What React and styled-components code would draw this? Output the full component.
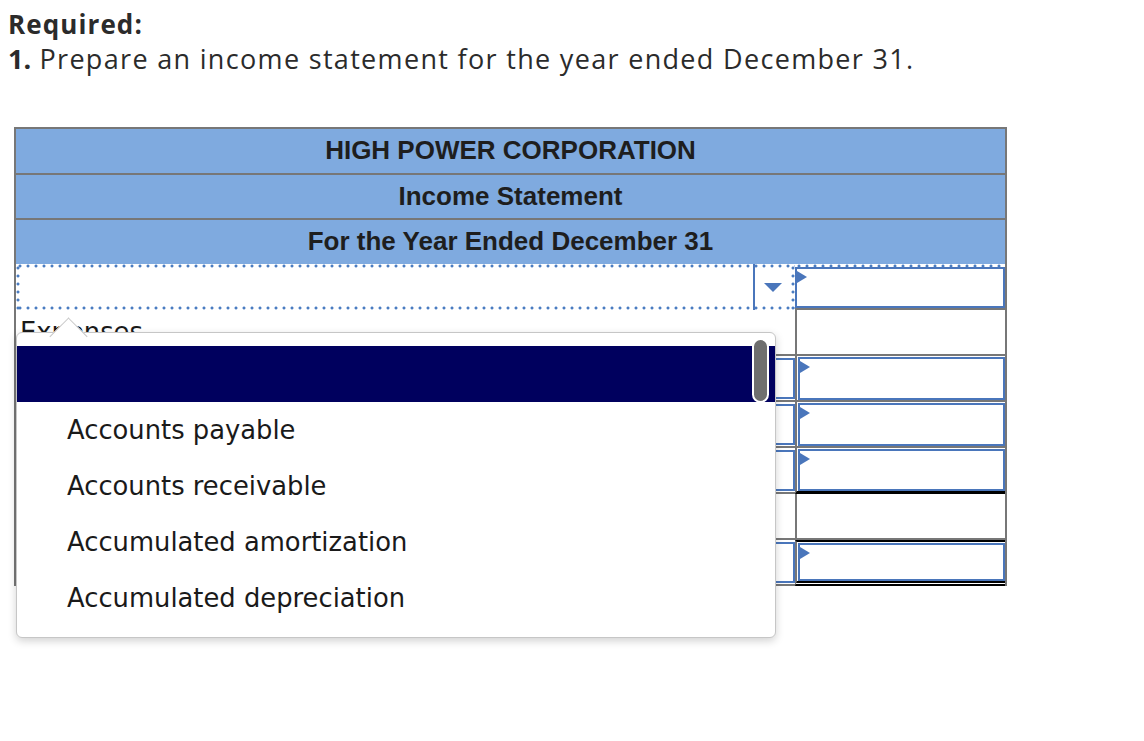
import React from "react";
import styled, { createGlobalStyle, css } from "styled-components";

const Global = createGlobalStyle`
  html, body { margin: 0; padding: 0; background: #fff; }
  body { font-family: "Liberation Sans", Arial, sans-serif; color: #222; }
`;

const DOT = "#4a7cc1";
const dotH = `radial-gradient(circle, ${DOT} 1.2px, transparent 1.8px)`;

const Page = styled.div`
  padding: 9px 0 0 8px;
  width: 1144px;
  height: 741px;
  box-sizing: border-box;
  overflow: hidden;
`;

const Heading = styled.div`
  font-family: "Open Sans", Lato, sans-serif;
  font-weight: 700;
  font-size: 26px;
  line-height: 31px;
  color: #2b2b2b;
  letter-spacing: 1.1px;
`;

const Instruction = styled.div`
  font-family: "Open Sans", Lato, sans-serif;
  font-size: 27px;
  line-height: 38px;
  letter-spacing: 1.32px;
  color: #2b2b2b;
  b { font-weight: 700; letter-spacing: 0; }
`;

const TableWrap = styled.div`
  position: relative;
  margin: 49px 0 0 6px;
  width: 993px;
`;

const Statement = styled.div`
  border: 2px solid #777;
  border-bottom: none;
  width: 993px;
  box-sizing: border-box;
`;

const HeaderRow = styled.div`
  height: 43.5px;
  display: flex;
  align-items: center;
  justify-content: center;
  background: #7faadf;
  font-family: "Liberation Sans", Arial, sans-serif;
  font-weight: 700;
  font-size: 26px;
  color: #1e1e1e;
  border-bottom: ${(p) => (p.$last ? "none" : "2px solid #777")};
`;

const BodyRow = styled.div`
  display: grid;
  grid-template-columns: 779px 1fr;
  height: 46px;
  box-sizing: border-box;
`;

const dottedFrame = css`
  background:
    ${dotH} 0 0 / 8px 4px repeat-x,
    ${dotH} 0 100% / 8px 4px repeat-x,
    ${dotH} 0 0 / 4px 8px repeat-y,
    ${dotH} 100% 0 / 4px 8px repeat-y;
  padding: 4px 4px 4px 4px;
`;

const LabelCell = styled.div`
  box-sizing: border-box;
  display: flex;
  align-items: center;
  position: relative;
  font-family: "DejaVu Sans", Verdana, sans-serif;
  font-size: 25.8px;
  color: #1a1a1a;
  padding-left: 4px;
  ${(p) =>
    p.$focused
      ? dottedFrame
      : css`
          border-bottom: 2px solid #777;
        `}
`;

const SelectBox = styled.div`
  flex: 1;
  align-self: stretch;
  display: flex;
  justify-content: flex-end;
  box-sizing: border-box;
  ${(p) =>
    p.$boxed &&
    css`
      margin: 2px 0 1px 4px;
      border: 2px solid #4a76bb;
    `}
`;

const ArrowZone = styled.div`
  width: 36px;
  margin: -4px 0;
  border-left: 2px solid #4a76bb;
  display: flex;
  align-items: center;
  justify-content: center;
  &::after {
    content: "";
    border-left: 9px solid transparent;
    border-right: 9px solid transparent;
    border-top: 9px solid #4a76bb;
    margin-top: 1px;
  }
`;

const bottomBorders = {
  gray: "2px solid #777",
  black: "3px solid #000",
  double: "5px double #000",
};

const AmountCell = styled.div`
  box-sizing: border-box;
  border-left: ${(p) => (p.$focused ? "none" : "2px solid #777")};
  border-top: ${(p) => (p.$topBlack ? "2px solid #000" : "none")};
  border-bottom: ${(p) => bottomBorders[p.$bottom || "gray"]};
  padding: 1px 0 0 1px;
  display: flex;
  ${(p) =>
    p.$focused &&
    css`
      background: ${dotH} 0 0 / 8px 4px repeat-x;
      padding: 3px 0 0 0;
    `}
`;

const AmountInput = styled.div`
  flex: 1;
  position: relative;
  box-sizing: border-box;
  border: 2px solid #4a76bb;
  &::before {
    content: "";
    position: absolute;
    left: 0;
    top: 2px;
    border-top: 6px solid transparent;
    border-bottom: 6px solid transparent;
    border-left: 10px solid #4a76bb;
  }
`;

const Popup = styled.div`
  position: absolute;
  left: 2px;
  top: 205px;
  width: 760px;
  height: 306px;
  box-sizing: border-box;
  background: #fff;
  border: 1px solid #c6c6c6;
  border-radius: 6px;
  box-shadow: 0 3px 8px rgba(0, 0, 0, 0.18);
  padding: 13px 0 0 0;
  z-index: 5;
  &::before {
    content: "";
    position: absolute;
    left: 38px;
    top: -10px;
    width: 26px;
    height: 26px;
    background: #fff;
    border-left: 1px solid #c6c6c6;
    border-top: 1px solid #c6c6c6;
    transform: rotate(45deg);
  }
`;

const OptionList = styled.ul`
  list-style: none;
  margin: 0;
  padding: 0;
  position: relative;
`;

const Option = styled.li`
  height: 56px;
  display: flex;
  align-items: center;
  padding-left: 50px;
  font-family: "DejaVu Sans", Verdana, sans-serif;
  font-size: 25.8px;
  color: #1a1a1a;
  background: ${(p) => (p.$active ? "#00005e" : "transparent")};
`;

const ScrollThumb = styled.div`
  position: absolute;
  right: 6px;
  top: 5px;
  width: 17px;
  height: 65px;
  box-sizing: border-box;
  background: #6f6f6f;
  border: 2px solid #fff;
  border-radius: 9px;
  z-index: 2;
`;

const rows = [
  { label: "focused", amount: "input" },
  { label: "text", text: "Expenses", amount: "empty" },
  { label: "select", amount: "input" },
  { label: "select", amount: "input" },
  { label: "select", amount: "input", bottom: "black" },
  { label: "empty", amount: "empty" },
  { label: "select", amount: "input", bottom: "double", topBlack: true },
];

const options = [
  "",
  "Accounts payable",
  "Accounts receivable",
  "Accumulated amortization",
  "Accumulated depreciation",
];

export default function App() {
  return (
    <>
      <Global />
      <Page>
        <Heading>Required:</Heading>
        <Instruction>
          <b>1.</b> Prepare an income statement for the year ended December 31.
        </Instruction>
        <TableWrap>
          <Statement>
            <HeaderRow>HIGH POWER CORPORATION</HeaderRow>
            <HeaderRow>Income Statement</HeaderRow>
            <HeaderRow $last>For the Year Ended December 31</HeaderRow>
            {rows.map((r, i) => (
              <BodyRow key={i}>
                <LabelCell $focused={r.label === "focused"}>
                  {r.label === "focused" && (
                    <SelectBox>
                      <ArrowZone />
                    </SelectBox>
                  )}
                  {r.label === "select" && <SelectBox $boxed />}
                  {r.label === "text" && r.text}
                </LabelCell>
                <AmountCell
                  $focused={r.label === "focused"}
                  $bottom={r.bottom}
                  $topBlack={r.topBlack}
                >
                  {r.amount === "input" && <AmountInput />}
                </AmountCell>
              </BodyRow>
            ))}
          </Statement>
          <Popup>
            <ScrollThumb />
            <OptionList>
              {options.map((o, i) => (
                <Option key={i} $active={i === 0}>
                  {o}
                </Option>
              ))}
            </OptionList>
          </Popup>
        </TableWrap>
      </Page>
    </>
  );
}
